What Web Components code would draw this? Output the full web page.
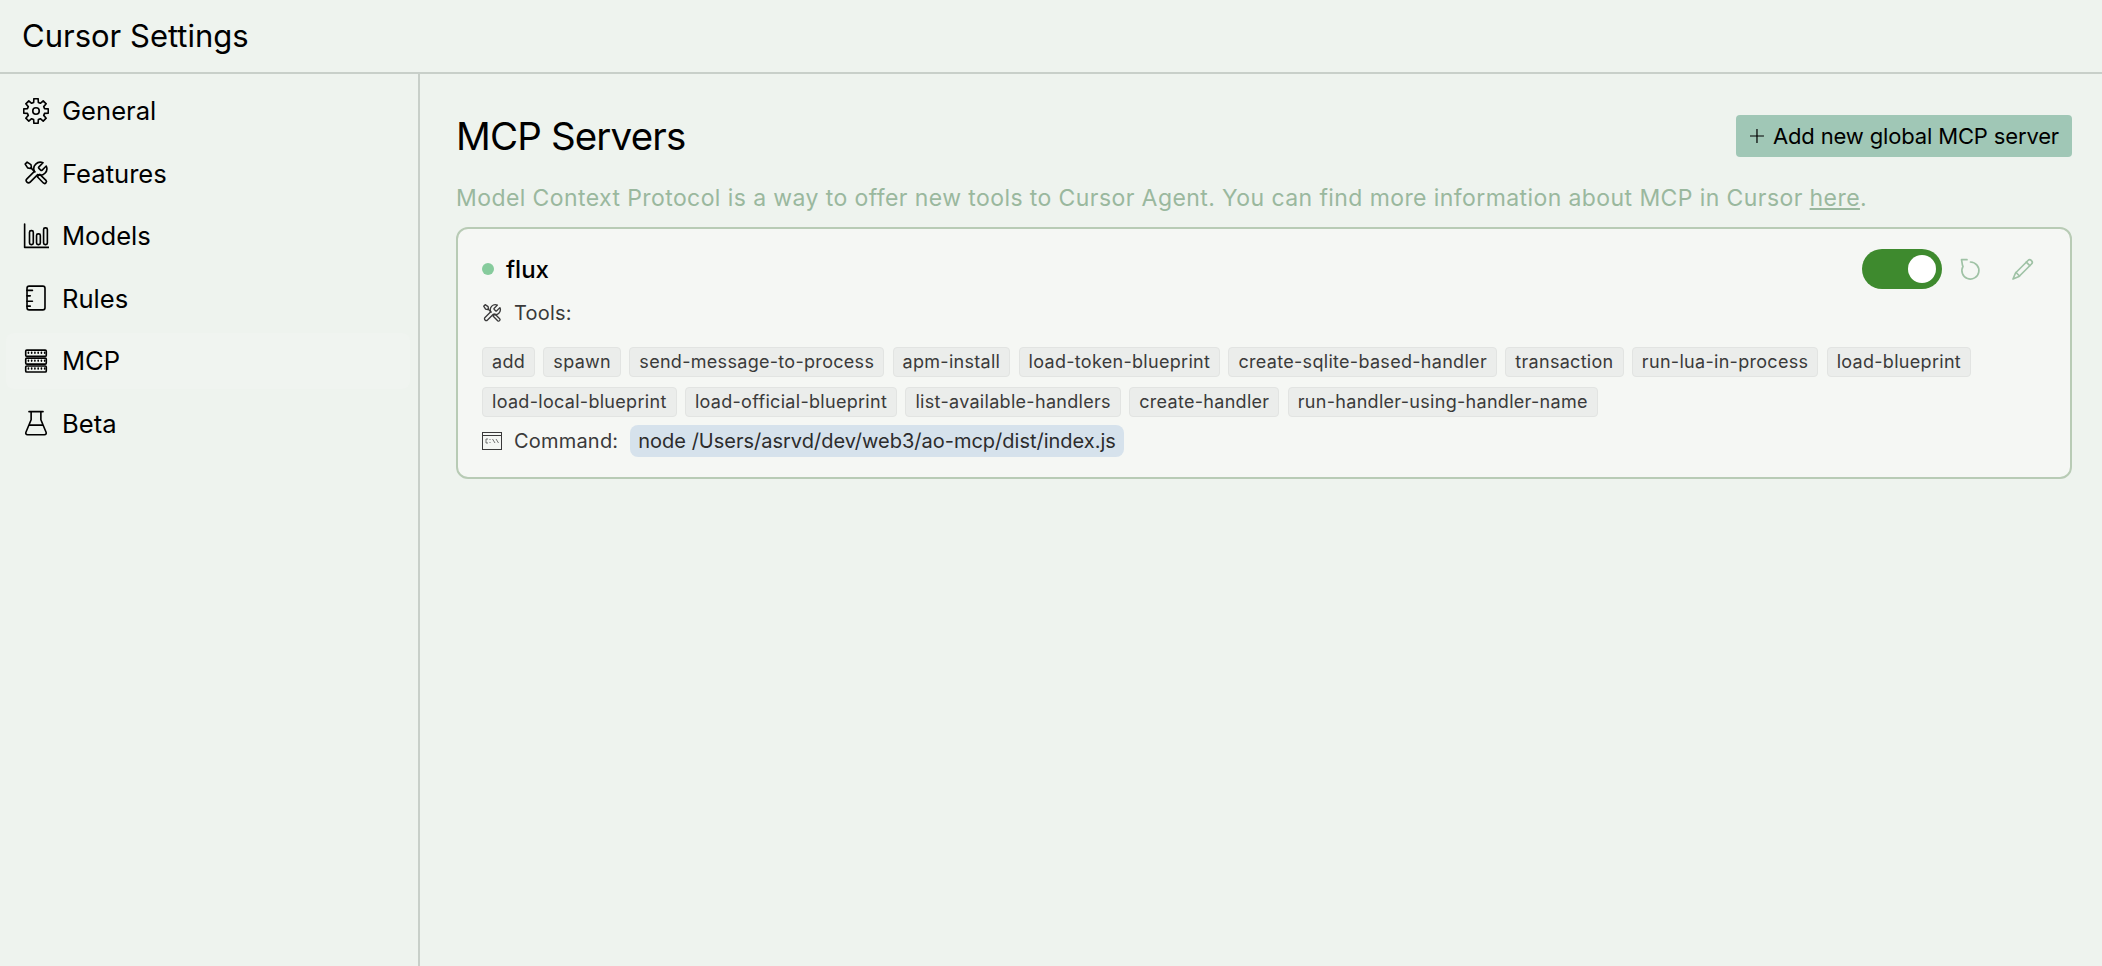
<!DOCTYPE html>
<html>
<head>
<meta charset="utf-8">
<title>Cursor Settings</title>
<style>
html,body{margin:0;height:100%;background:#eef3ee;}
body{font-family:Inter,"Noto Sans",sans-serif;color:#000;}
</style>
</head>
<body>
<settings-app>
  <settings-nav slot="nav">
    <nav-item icon="gear">General</nav-item>
    <nav-item icon="tools">Features</nav-item>
    <nav-item icon="chart">Models</nav-item>
    <nav-item icon="rules">Rules</nav-item>
    <nav-item icon="server" active>MCP</nav-item>
    <nav-item icon="flask">Beta</nav-item>
  </settings-nav>
  <mcp-page>
    <mcp-card name="flux" command="node /Users/asrvd/dev/web3/ao-mcp/dist/index.js">
      <tool-tag>add</tool-tag><tool-tag>spawn</tool-tag><tool-tag>send-message-to-process</tool-tag><tool-tag>apm-install</tool-tag><tool-tag>load-token-blueprint</tool-tag><tool-tag>create-sqlite-based-handler</tool-tag><tool-tag>transaction</tool-tag><tool-tag>run-lua-in-process</tool-tag><tool-tag>load-blueprint</tool-tag><tool-tag>load-local-blueprint</tool-tag><tool-tag>load-official-blueprint</tool-tag><tool-tag>list-available-handlers</tool-tag><tool-tag>create-handler</tool-tag><tool-tag>run-handler-using-handler-name</tool-tag>
    </mcp-card>
  </mcp-page>
</settings-app>
<script>
// 8 tooth gear outline
function gearPath() {
  let d = '';
  for (let i = 0; i < 8; i++) {
    const a = i * Math.PI / 4 - Math.PI / 2;
    const pts = [[8.2,-.27],[11.5,-.17],[11.5,.17],[8.2,.27]];
    pts.forEach(([r, o]) => {
      d += (d ? 'L' : 'M') + (12 + r * Math.cos(a + o)).toFixed(2) + ' ' + (12 + r * Math.sin(a + o)).toFixed(2);
    });
  }
  return d + 'z';
}
const ICONS = {
  gear:`<path d="${gearPath()}"/><circle cx="12" cy="12" r="3"/>`,
  tools:`<path d="M14.700 6.300a1 1 0 0 0 0 1.400l1.600 1.600a1 1 0 0 0 1.400 0l3.770-3.770a6 6 0 0 1-7.940 7.940l-6.910 6.910a2.120 2.120 0 0 1-3-3l6.910-6.910a6 6 0 0 1 7.940-7.940l-3.760 3.760z"/><path d="M2 3.800 3.800 2 7.300 4.300 7.800 6.800 6.800 7.800 4.300 7.300z"/><path d="M7.300 7.300 11 11"/><path d="M13.200 15.500 15.500 13.200 21.200 18.800a1.700 1.700 0 0 1-2.400 2.400z"/>`,
  chart:`<path d="M1.500 1v21.500H24"/><rect x="6" y="7" width="3.500" height="13" rx="1.500"/><rect x="12.500" y="10" width="3.500" height="10" rx="1.500"/><rect x="19" y="4.500" width="3.500" height="15.500" rx="1.500"/>`,
  rules:`<rect x="3.700" y="1" width="16.600" height="22" rx="2"/><path d="M3.700 5h5M3.700 10h3M3.700 15h5M3.700 19.500h3"/>`,
  server:`<rect x="2.500" y="2" width="19" height="5.600" rx="1"/><rect x="2.500" y="9.300" width="19" height="5.600" rx="1"/><rect x="2.500" y="16.600" width="19" height="5.600" rx="1"/><path d="M5 4v.8M8 4v.8M11 4v.8M14 4v.8M17 4v.8M20 4v.8M5 11.300v.8M8 11.300v.8M11 11.300v.8M14 11.300v.8M17 11.300v.8M20 11.300v.8M5 18.600v.8M8 18.600v.8M11 18.600v.8M14 18.600v.8M17 18.600v.8M20 18.600v.8"/>`,
  flask:`<path d="M5.500 1.500h13M7.500 1.500V9L2.700 20.500c-.5 1.300.2 2.300 1.500 2.300h15.600c1.300 0 2-1 1.500-2.300L16.500 9V1.500M5.500 14h13"/>`,
  refresh:`<path d="M12.500 5A8.500 8.500 0 1 1 5 9.300"/><path d="M9 2.700H3.500L4.500 8.300"/>`,
  pencil:`<path d="M17 3.500c1-1 2.300-1 3.200-.1l.4.4c.9.900.9 2.200-.1 3.200L8 19.500l-6 2.500 2.500-6z"/><path d="M5 15.500 8.500 19M15.300 5.200l3.500 3.500"/>`
};
const icon = (name, size, stroke) => `<svg width="${size}" height="${size}" viewBox="0 0 24 24" fill="none" stroke="currentColor" stroke-width="${stroke}" stroke-linejoin="round" stroke-linecap="round">${ICONS[name]}</svg>`;

class SettingsApp extends HTMLElement {
  constructor() {
    super();
    this.attachShadow({mode:'open'});
    this.shadowRoot.innerHTML = `
    <style>
      :host{display:flex;flex-direction:column;height:966px;overflow:hidden;}
      header{height:70px;padding-bottom:2px;border-bottom:2px solid #c8cfc9;display:flex;align-items:center;padding-left:22px;font-size:31px;}
      .body{flex:1;display:flex;min-height:0;}
      aside{width:418px;flex:none;border-right:2px solid #c8cfc9;}
      main{flex:1;min-width:0;}
    </style>
    <header>Cursor Settings</header>
    <div class="body">
      <aside><slot name="nav"></slot></aside>
      <main><slot></slot></main>
    </div>`;
  }
}
customElements.define('settings-app', SettingsApp);

class SettingsNav extends HTMLElement {
  constructor() {
    super();
    this.attachShadow({mode:'open'});
    this.shadowRoot.innerHTML = `
    <style>:host{display:flex;flex-direction:column;gap:6.500px;padding:8.500px 8px 0 6px;}</style>
    <slot></slot>`;
  }
}
customElements.define('settings-nav', SettingsNav);

class NavItem extends HTMLElement {
  constructor() {
    super();
    this.attachShadow({mode:'open'});
    this.shadowRoot.innerHTML = `
    <style>
      :host{display:flex;align-items:center;gap:13px;height:56px;padding-left:17px;font-size:25.600px;border-radius:8px;}
      :host([active]){background:#f0f4f0;}
      svg{display:block;flex:none;}
    </style>
    ${icon(this.getAttribute('icon'), 26, 1.5)}<slot></slot>`;
  }
}
customElements.define('nav-item', NavItem);

class McpPage extends HTMLElement {
  constructor() {
    super();
    this.attachShadow({mode:'open'});
    this.shadowRoot.innerHTML = `
    <style>
      :host{display:block;padding:39px 30px 0 36px;}
      .top{display:flex;justify-content:space-between;align-items:center;height:46px;}
      h1{margin:0;font-size:38.500px;font-weight:400;line-height:46px;letter-spacing:-.85px;}
      button{font:inherit;font-size:22px;letter-spacing:-.15px;color:#000;background:#a0c7b6;border:0;border-radius:4px;height:42px;width:336px;box-sizing:border-box;padding:0 13px 0 14px;display:flex;align-items:center;gap:9px;white-space:nowrap;}
      p{margin:22px 0 12px;font-size:23px;line-height:34px;color:#9ab89e;letter-spacing:.41px;}
      a{color:inherit;text-decoration:underline;}
    </style>
    <div class="top">
      <h1>MCP Servers</h1>
      <button><svg width="16" height="16" viewBox="0 0 16 16" fill="none" stroke="currentColor" stroke-width="1.400"><path d="M8 0v16M0 8h16"/></svg>Add new global MCP server</button>
    </div>
    <p>Model Context Protocol is a way to offer new tools to Cursor Agent. You can find more information about MCP in Cursor <a href="#">here</a>.</p>
    <slot></slot>`;
  }
}
customElements.define('mcp-page', McpPage);

class McpCard extends HTMLElement {
  constructor() {
    super();
    this.attachShadow({mode:'open'});
    this.shadowRoot.innerHTML = `
    <style>
      :host{display:block;box-sizing:border-box;height:252px;background:#f5f7f4;border:2px solid #b8cbb5;border-radius:12px;padding:9px 24px 0;}
      .head{display:flex;align-items:center;height:62px;}
      .dot{width:12px;height:12px;border-radius:50%;background:#86cb9c;margin-right:12px;}
      .name{font-size:24px;font-weight:500;flex:1;}
      .toggle{width:80px;height:40px;border-radius:20px;background:#3e8a2e;position:relative;}
      .toggle::after{content:"";position:absolute;right:6px;top:6px;width:28px;height:28px;border-radius:50%;background:#fff;}
      .act{color:#9fc2a5;display:flex;margin-left:16px;}
      .act + .act{margin-left:29px;margin-right:11px;}
      .row{display:flex;align-items:center;font-size:20px;color:#3a3a3a;letter-spacing:.2px;}
      .row svg{display:block;flex:none;margin-right:12px;}
      .tools{height:26px;}
      .tags{display:flex;flex-wrap:wrap;gap:10px 8.300px;margin-top:21px;}
      .cmd{margin-top:8px;height:32px;}
      code{font:inherit;font-size:20px;letter-spacing:0;background:#d6e2ec;border-radius:8px;height:32px;line-height:32px;padding:0 8px;margin-left:12px;color:#2c2c2c;}
    </style>
    <div class="head">
      <span class="dot"></span><span class="name">${this.getAttribute('name')}</span>
      <span class="toggle"></span>
      <span class="act">${icon('refresh', 24, 1.7)}</span>
      <span class="act">${icon('pencil', 24, 1.7)}</span>
    </div>
    <div class="row tools">${icon('tools', 20, 1.6)}Tools:</div>
    <div class="tags"><slot></slot></div>
    <div class="row cmd"><svg width="20" height="20" viewBox="0 0 20 20" fill="none" stroke="currentColor" stroke-width="1"><rect x=".5" y="1.500" width="19" height="17"/><path d="M.5 4.500h19"/><path d="M6 8H4v4h2M8 8v1M8 11v1M10.500 8l2.500 4M14 8l2.500 4" stroke-width=".7"/></svg>Command:<code>${this.getAttribute('command')}</code></div>`;
  }
}
customElements.define('mcp-card', McpCard);

class ToolTag extends HTMLElement {
  constructor() {
    super();
    this.attachShadow({mode:'open'});
    this.shadowRoot.innerHTML = `
    <style>
      :host{display:block;box-sizing:border-box;height:30px;line-height:27px;padding:0 9px;font-size:18px;letter-spacing:.3px;color:#3a3a3a;background:#ebedeb;border:1.500px solid #e2e4e2;border-radius:4px;white-space:nowrap;}
    </style>
    <slot></slot>`;
  }
}
customElements.define('tool-tag', ToolTag);
</script>
</body>
</html>
